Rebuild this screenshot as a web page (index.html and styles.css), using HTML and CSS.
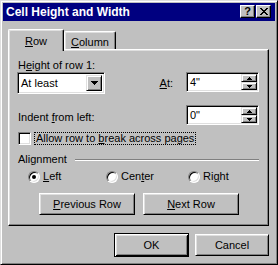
FILE: index.html
```html
<!DOCTYPE html>
<html lang="en">
<head>
    <meta charset="UTF-8">
    <title>Cell Height and Width</title>
    <link rel="stylesheet" href="styles.css">
</head>
<body>
    <div class="window">
        <div class="titlebar">
            <span class="title">Cell Height and Width</span>
            <span class="caption-btn help">?</span>
            <span class="caption-btn close">
                <svg width="8" height="7" viewBox="0 0 8 7"><path d="M0 0h2v1H0zM6 0h2v1H6zM1 1h2v1H1zM5 1h2v1H5zM2 2h4v1H2zM3 3h2v1H3zM2 4h4v1H2zM1 5h2v1H1zM5 5h2v1H5zM0 6h2v1H0zM6 6h2v1H6z"/></svg>
            </span>
        </div>

        <div class="content">
            <div class="tabs">
                <div class="tab active"><u>R</u>ow</div>
                <div class="tab column"><u>C</u>olumn</div>
            </div>

            <div class="panel">
                <div class="label">H<u>e</u>ight of row 1:</div>
                <div class="row">
                    <div class="field combo">
                        <span class="value">At least</span>
                        <span class="drop-btn">
                            <svg width="7" height="4" viewBox="0 0 7 4"><path d="M0 0h7v1H6v1H5v1H4v1H3V3H2V2H1V1H0z"/></svg>
                        </span>
                    </div>
                    <div class="spin-group">
                        <span class="side-label at"><u>A</u>t:</span>
                        <div class="field spin">
                            <span class="value">4"</span>
                            <span class="arrows">
                                <span class="arrow-btn"><svg width="5" height="3" viewBox="0 0 5 3"><path d="M2 0h1v1h1v1h1v1H0V2h1V1h1z"/></svg></span>
                                <span class="arrow-btn"><svg width="5" height="3" viewBox="0 0 5 3"><path d="M0 0h5v1H4v1H3v1H2V2H1V1H0z"/></svg></span>
                            </span>
                        </div>
                    </div>
                </div>

                <div class="row indent">
                    <span class="side-label">Indent <u>f</u>rom left:</span>
                    <div class="field spin">
                        <span class="value">0"</span>
                        <span class="arrows">
                            <span class="arrow-btn"><svg width="5" height="3" viewBox="0 0 5 3"><path d="M2 0h1v1h1v1h1v1H0V2h1V1h1z"/></svg></span>
                            <span class="arrow-btn"><svg width="5" height="3" viewBox="0 0 5 3"><path d="M0 0h5v1H4v1H3v1H2V2H1V1H0z"/></svg></span>
                        </span>
                    </div>
                </div>

                <div class="check-row">
                    <span class="checkbox"></span>
                    <span class="focus">Allow row to <u>b</u>reak across pages</span>
                </div>

                <div class="group-head">
                    <span>Alignment</span>
                    <span class="etched"></span>
                </div>

                <div class="radios">
                    <div class="radio-item"><span class="radio checked"></span><span><u>L</u>eft</span></div>
                    <div class="radio-item"><span class="radio"></span><span>Cen<u>t</u>er</span></div>
                    <div class="radio-item"><span class="radio"></span><span>Ri<u>g</u>ht</span></div>
                </div>

                <div class="nav-buttons">
                    <button class="btn wide"><u>P</u>revious Row</button>
                    <button class="btn wide"><u>N</u>ext Row</button>
                </div>
            </div>

            <div class="footer">
                <button class="btn default">OK</button>
                <button class="btn">Cancel</button>
            </div>
        </div>
    </div>
</body>
</html>
```

FILE: styles.css
```css
* {
    box-sizing: border-box;
}
body {
    margin: 0;
    font-family: "Liberation Sans", Arial, sans-serif;
    font-size: 11px;
    line-height: 13px;
    color: #000;
    background: #c0c0c0;
}
u {
    text-underline-offset: 1px;
}

/* window frame */
.window {
    width: 278px;
    height: 265px;
    padding: 2px;
    background: #c0c0c0;
    border: 1px solid;
    border-color: #dfdfdf #000 #000 #dfdfdf;
    box-shadow: inset 1px 1px #fff, inset -1px -1px #808080;
    display: flex;
    flex-direction: column;
}
.titlebar {
    height: 18px;
    background: #000080;
    color: #fff;
    display: flex;
    align-items: flex-start;
    padding: 0 4px 0 3px;
}
.title {
    flex: 1;
    font-weight: bold;
    font-size: 12px;
    line-height: 18px;
}
.caption-btn {
    width: 15px;
    height: 13px;
    margin-top: 2px;
    background: #c0c0c0;
    color: #000;
    border: 1px solid;
    border-color: #fff #000 #000 #fff;
    box-shadow: inset -1px -1px #808080;
    display: flex;
    align-items: center;
    justify-content: center;
}
.caption-btn.help {
    margin-right: 1px;
    font-weight: bold;
    font-size: 11px;
    line-height: 11px;
}
.caption-btn svg {
    display: block;
}

.content {
    flex: 1;
    padding: 8px 6px 0 5px;
    display: flex;
    flex-direction: column;
}

/* tabs */
.tabs {
    height: 20px;
    display: flex;
    align-items: flex-end;
}
.tab {
    height: 18px;
    width: 52px;
    text-align: center;
    padding-top: 4px;
    background: #c0c0c0;
    border: 1px solid;
    border-bottom: none;
    border-color: #fff #000 #000 #fff;
    border-radius: 2px 2px 0 0;
    box-shadow: inset -1px 0 #808080, inset 1px 1px #dfdfdf;
}
.tab.active {
    width: 56px;
    height: 22px;
    margin-bottom: -2px;
    padding-top: 5px;
    position: relative;
    z-index: 1;
}

.panel {
    border: 1px solid;
    border-color: #fff #000 #000 #fff;
    box-shadow: inset -1px -1px #808080, inset 1px 1px #dfdfdf;
    padding: 9px 9px 10px 9px;
}
.row {
    display: flex;
    justify-content: space-between;
    align-items: flex-start;
}
.row.indent {
    margin-top: 11px;
}
.row.indent .side-label {
    margin-top: 6px;
}
.spin-group {
    display: flex;
    align-items: flex-start;
    gap: 13px;
}
.side-label.at {
    margin-top: 5px;
}

/* sunken fields */
.field {
    background: #fff;
    border: 1px solid;
    border-color: #808080 #fff #fff #808080;
    box-shadow: inset 1px 1px #000, inset -1px -1px #dfdfdf;
    padding: 1px;
    display: flex;
    align-items: center;
}
.field .value {
    flex: 1;
    padding-left: 2px;
}
.combo {
    width: 88px;
    height: 22px;
    margin-left: -1px;
    padding: 2px 2px 2px 1px;
}
.spin {
    width: 73px;
    height: 20px;
}
.drop-btn,
.arrow-btn {
    background: #c0c0c0;
    border: 1px solid;
    border-color: #dfdfdf #000 #000 #dfdfdf;
    box-shadow: inset 1px 1px #fff, inset -1px -1px #808080;
    display: flex;
    align-items: center;
    justify-content: center;
}
.drop-btn {
    width: 16px;
    height: 16px;
}
.arrows {
    width: 16px;
    height: 16px;
    display: flex;
    flex-direction: column;
}
.arrow-btn {
    height: 8px;
}
.drop-btn svg,
.arrow-btn svg {
    display: block;
}

/* checkbox */
.check-row {
    margin-top: 7px;
    display: flex;
    align-items: center;
}
.checkbox {
    width: 13px;
    height: 13px;
    background: #fff;
    border: 1px solid;
    border-color: #808080 #fff #fff #808080;
    box-shadow: inset 1px 1px #000, inset -1px -1px #dfdfdf;
}
.focus {
    margin-left: 3px;
    padding: 0 1px;
    line-height: 11px;
    border: 1px dotted #000;
}

/* group */
.group-head {
    margin-top: 8px;
    display: flex;
    align-items: center;
}
.etched {
    flex: 1;
    height: 2px;
    margin-left: 8px;
    border-top: 1px solid #808080;
    border-bottom: 1px solid #fff;
}
.radios {
    margin-top: 4px;
    padding-left: 10px;
    display: grid;
    grid-template-columns: 78px 82px auto;
}
.radio-item {
    display: flex;
    align-items: center;
    gap: 3px;
}
.radio {
    width: 12px;
    height: 12px;
    border-radius: 50%;
    background: #fff;
    border: 1px solid;
    border-color: #808080 #fff #fff #808080;
    box-shadow: inset 1px 1px #000, inset -1px -1px #dfdfdf;
    display: flex;
    align-items: center;
    justify-content: center;
}
.radio.checked::after {
    content: "";
    width: 4px;
    height: 4px;
    border-radius: 50%;
    background: #000;
}

/* buttons */
.btn {
    font: inherit;
    color: #000;
    height: 22px;
    width: 74px;
    padding: 0;
    background: #c0c0c0;
    border: 1px solid;
    border-color: #fff #000 #000 #fff;
    box-shadow: inset 1px 1px #dfdfdf, inset -1px -1px #808080;
}
.btn.wide {
    width: 96px;
}
.btn.default {
    width: 75px;
    height: 24px;
    border-color: #000;
    box-shadow: inset 1px 1px #fff, inset -1px -1px #000, inset 2px 2px #dfdfdf, inset -2px -2px #808080;
}
.nav-buttons {
    margin-top: 10px;
    padding-left: 21px;
    display: flex;
    gap: 8px;
}
.footer {
    margin-top: 7px;
    display: flex;
    justify-content: flex-end;
    align-items: center;
    gap: 6px;
}
```
